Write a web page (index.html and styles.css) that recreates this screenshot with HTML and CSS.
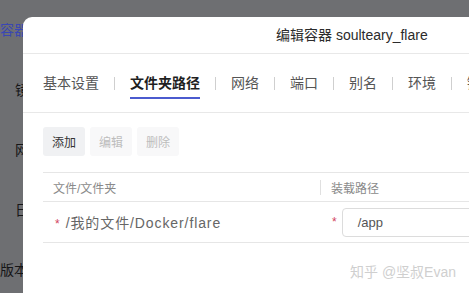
FILE: index.html
```html
<!DOCTYPE html>
<html lang="zh">
<head>
<meta charset="utf-8">
<link rel="stylesheet" href="styles.css">
</head>
<body>
<div class="page">
  <div class="side">
    <div class="side-item blue">容器管理</div>
    <div class="side-item indent">镜像</div>
    <div class="side-item indent">网络</div>
    <div class="side-item indent">日志</div>
    <div class="side-item">版本</div>
  </div>
</div>
<div class="modal">
  <div class="modal-head">编辑容器 soulteary_flare</div>
  <div class="tabs">
    <div class="tab">基本设置</div>
    <div class="sep"></div>
    <div class="tab active">文件夹路径</div>
    <div class="sep"></div>
    <div class="tab">网络</div>
    <div class="sep"></div>
    <div class="tab">端口</div>
    <div class="sep"></div>
    <div class="tab">别名</div>
    <div class="sep"></div>
    <div class="tab">环境</div>
    <div class="sep"></div>
    <div class="tab">链接</div>
  </div>
  <div class="body">
    <div class="toolbar">
      <button class="btn">添加</button>
      <button class="btn disabled">编辑</button>
      <button class="btn disabled">删除</button>
    </div>
    <div class="table">
      <div class="thead">
        <div class="col1">文件/文件夹</div>
        <div class="col2"><span class="hsep"></span>装载路径</div>
      </div>
      <div class="trow">
        <div class="col1"><span class="req">*</span><span class="path">/我的文件/Docker/flare</span></div>
        <div class="col2 cell2"><span class="req r2">*</span><div class="input">/app</div></div>
      </div>
    </div>
  </div>
</div>
<div class="watermark">知乎 @坚叔Evan</div>
</body>
</html>
```
FILE: styles.css
```css
html, body {
  margin: 0;
  padding: 0;
}
body {
  width: 469px;
  height: 293px;
  overflow: hidden;
  background: #6e6f72;
  font-family: "Liberation Sans", "Noto Sans CJK SC", sans-serif;
  position: relative;
}
.page {
  height: 100%;
}
.side {
  display: flex;
  flex-direction: column;
}
.side-item {
  height: 60px;
  line-height: 60px;
  font-size: 14px;
  color: #161618;
  white-space: nowrap;
}
.side-item.blue {
  color: #3a47b3;
}
.side-item.indent {
  padding-left: 15px;
}
.modal {
  position: absolute;
  left: 23px;
  top: 17px;
  width: 540px;
  height: 320px;
  background: #fff;
  border-radius: 9px;
}
.modal-head {
  height: 36px;
  line-height: 36px;
  border-bottom: 1px solid #e8e8e8;
  padding-left: 253px;
  font-size: 14px;
  color: #2b2b2b;
  white-space: nowrap;
}
.tabs {
  display: flex;
  align-items: center;
  padding: 19px 0 0 20px;
  height: 26px;
  border-bottom: 1px solid #e8e8e8;
  padding-bottom: 13px;
}
.tab {
  font-size: 14px;
  color: #555;
  height: 26px;
  line-height: 20px;
  box-sizing: border-box;
  white-space: nowrap;
}
.tab.active {
  color: #1f1f1f;
  font-weight: bold;
  border-bottom: 2px solid #4b5bcf;
}
.sep {
  width: 1px;
  height: 13px;
  background: #cfcfcf;
  margin: 0 15px 6px;
}
.body {
  padding: 14px 0 0 20px;
}
.toolbar {
  display: flex;
  gap: 5px;
}
.btn {
  border: none;
  font-family: inherit;
  font-size: 12px;
  height: 29px;
  padding: 0 9px;
  border-radius: 3px;
  background: #f0f1f3;
  color: #333;
}
.btn.disabled {
  background: #f8f8f9;
  color: #bdbdbd;
}
.table {
  margin-top: 16px;
  font-size: 12px;
}
.thead, .trow {
  display: flex;
  align-items: center;
  border-top: 1px solid #e6e6e6;
}
.thead {
  height: 28px;
  color: #8a8a8a;
}
.trow {
  height: 40px;
  border-bottom: 1px solid #e6e6e6;
  color: #666;
}
.col1 {
  width: 277px;
  padding-left: 10px;
  box-sizing: border-box;
  white-space: nowrap;
}
.trow .col1 {
  padding-left: 12px;
}
.path {
  font-size: 14px;
  letter-spacing: 0.9px;
}
.col2 {
  display: flex;
  align-items: center;
  white-space: nowrap;
}
.hsep {
  width: 1px;
  height: 15px;
  background: #e0e0e0;
  margin-right: 10px;
}
.req {
  color: #d2445e;
  margin-right: 6px;
}
.r2 {
  margin-left: 12px;
  margin-right: 5px;
}
.input {
  width: 200px;
  height: 27px;
  line-height: 27px;
  border: 1px solid #dcdcdc;
  border-radius: 4px;
  padding-left: 15px;
  font-size: 13px;
  color: #555;
}
.watermark {
  position: absolute;
  left: 350px;
  top: 261px;
  font-size: 14px;
  color: #cfcfcf;
  white-space: nowrap;
}
```
